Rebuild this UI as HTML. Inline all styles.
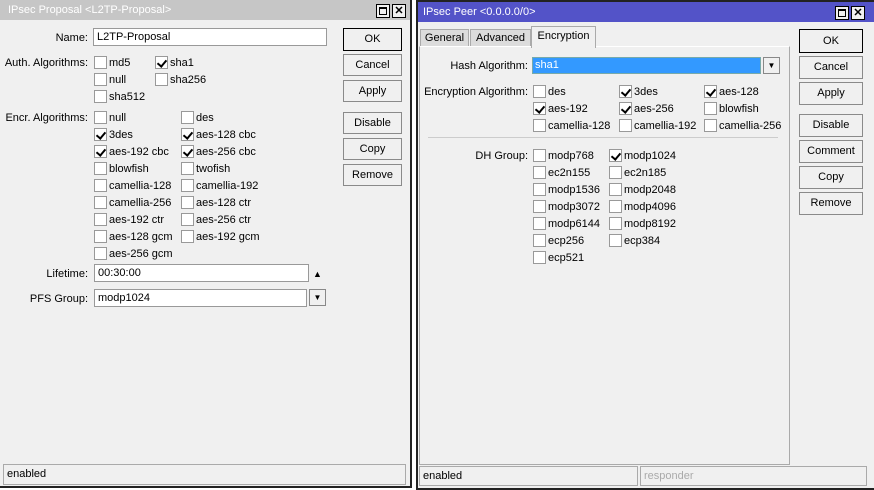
<!DOCTYPE html>
<html><head><meta charset="utf-8"><style>
*{margin:0;padding:0;box-sizing:border-box}
body{width:874px;height:488px;background:#fff;font-family:"Liberation Sans",sans-serif;font-size:11px;color:#000;position:relative;overflow:hidden}
.a{position:absolute;white-space:nowrap;line-height:13px;margin-top:1px}
.win{position:absolute;background:#f0f0f0;border:2px solid #222}
.title{position:absolute;left:0;right:0;top:0;height:20px;color:#fff;font-size:11px;line-height:20px;padding-left:4px}
.tb{position:absolute;top:3px;width:14px;height:14px;background:#f0f0f0;border:1px solid #000}
.cb{position:absolute;width:13px;height:13px;background:#fff;border:1px solid #999}
.cb.c::after{content:"";position:absolute;left:3px;top:1px;width:4px;height:7px;border:solid #000;border-width:0 2px 2px 0;transform:rotate(40deg)}
.btn{position:absolute;background:#f0f0f0;border:1px solid #8a8a8a;text-align:center;line-height:20px}
.in{position:absolute;background:#fff;border:1px solid #999;padding-left:3px;line-height:16px}
.lbl{position:absolute;text-align:right;white-space:nowrap;line-height:13px;margin-top:1px}
.dd{position:absolute;width:17px;height:17px;border:1px solid #888;background:#f0f0f0;font-size:8px;text-align:center;line-height:15px}
.st{position:absolute;border:1px solid #aaa;padding-left:3px;line-height:19px}
</style></head><body>

<div class="win" style="left:-2px;top:-2px;width:414px;height:490px">
<div class="title" style="background:#c6c6c6;padding-left:8px">IPsec Proposal &lt;L2TP-Proposal&gt;</div>
<div class="tb" style="left:376px;top:4px"><div style="position:absolute;left:2px;top:2px;width:8px;height:8px;border:1px solid #000;border-top-width:2px"></div></div>
<div class="tb" style="left:392px;top:4px;font-weight:bold;font-size:11px;line-height:12px;text-align:center">✕</div>
</div>
<div class="lbl" style="left:0;width:88px;top:31px">Name:</div>
<div class="in" style="left:93px;top:28px;width:234px;height:18px">L2TP-Proposal</div>
<div class="lbl" style="left:0;width:88px;top:56px">Auth. Algorithms:</div>
<div class="cb" style="left:94px;top:56px"></div><div class="a" style="left:109px;top:56px">md5</div>
<div class="cb c" style="left:155px;top:56px"></div><div class="a" style="left:170px;top:56px">sha1</div>
<div class="cb" style="left:94px;top:73px"></div><div class="a" style="left:109px;top:73px">null</div>
<div class="cb" style="left:155px;top:73px"></div><div class="a" style="left:170px;top:73px">sha256</div>
<div class="cb" style="left:94px;top:90px"></div><div class="a" style="left:109px;top:90px">sha512</div>

<div class="lbl" style="left:0;width:88px;top:111px">Encr. Algorithms:</div>
<div class="cb" style="left:94px;top:111px"></div><div class="a" style="left:109px;top:111px">null</div>
<div class="cb" style="left:181px;top:111px"></div><div class="a" style="left:196px;top:111px">des</div>
<div class="cb c" style="left:94px;top:128px"></div><div class="a" style="left:109px;top:128px">3des</div>
<div class="cb c" style="left:181px;top:128px"></div><div class="a" style="left:196px;top:128px">aes-128 cbc</div>
<div class="cb c" style="left:94px;top:145px"></div><div class="a" style="left:109px;top:145px">aes-192 cbc</div>
<div class="cb c" style="left:181px;top:145px"></div><div class="a" style="left:196px;top:145px">aes-256 cbc</div>
<div class="cb" style="left:94px;top:162px"></div><div class="a" style="left:109px;top:162px">blowfish</div>
<div class="cb" style="left:181px;top:162px"></div><div class="a" style="left:196px;top:162px">twofish</div>
<div class="cb" style="left:94px;top:179px"></div><div class="a" style="left:109px;top:179px">camellia-128</div>
<div class="cb" style="left:181px;top:179px"></div><div class="a" style="left:196px;top:179px">camellia-192</div>
<div class="cb" style="left:94px;top:196px"></div><div class="a" style="left:109px;top:196px">camellia-256</div>
<div class="cb" style="left:181px;top:196px"></div><div class="a" style="left:196px;top:196px">aes-128 ctr</div>
<div class="cb" style="left:94px;top:213px"></div><div class="a" style="left:109px;top:213px">aes-192 ctr</div>
<div class="cb" style="left:181px;top:213px"></div><div class="a" style="left:196px;top:213px">aes-256 ctr</div>
<div class="cb" style="left:94px;top:230px"></div><div class="a" style="left:109px;top:230px">aes-128 gcm</div>
<div class="cb" style="left:181px;top:230px"></div><div class="a" style="left:196px;top:230px">aes-192 gcm</div>
<div class="cb" style="left:94px;top:247px"></div><div class="a" style="left:109px;top:247px">aes-256 gcm</div>

<div class="lbl" style="left:0;width:88px;top:267px">Lifetime:</div>
<div class="in" style="left:94px;top:264px;width:215px;height:18px">00:30:00</div>
<div class="a" style="left:313px;top:267px;font-size:9px">▲</div>
<div class="lbl" style="left:0;width:88px;top:292px">PFS Group:</div>
<div class="in" style="left:94px;top:289px;width:213px;height:18px">modp1024</div>
<div class="dd" style="left:309px;top:289px">▼</div>

<div class="btn" style="left:343px;top:28px;width:59px;height:23px;border:1px solid #000;line-height:21px">OK</div>
<div class="btn" style="left:343px;top:54px;width:59px;height:22px">Cancel</div>
<div class="btn" style="left:343px;top:80px;width:59px;height:22px">Apply</div>
<div class="btn" style="left:343px;top:112px;width:59px;height:22px">Disable</div>
<div class="btn" style="left:343px;top:138px;width:59px;height:22px">Copy</div>
<div class="btn" style="left:343px;top:164px;width:59px;height:22px">Remove</div>

<div class="st" style="left:3px;top:464px;width:403px;height:21px">enabled</div>

<div class="win" style="left:416px;top:0;width:460px;height:490px">
<div class="title" style="background:#5353c8;padding-left:5px">IPsec Peer &lt;0.0.0.0/0&gt;</div>
<div class="tb" style="left:417px;top:4px"><div style="position:absolute;left:2px;top:2px;width:8px;height:8px;border:1px solid #000;border-top-width:2px"></div></div>
<div class="tb" style="left:433px;top:4px;font-weight:bold;font-size:11px;line-height:12px;text-align:center">✕</div>
</div>
<div class="a" style="left:420px;top:28px;width:49px;height:18px;background:#dcdcdc;border:1px solid #aaa;text-align:center;line-height:17px">General</div>
<div class="a" style="left:470px;top:28px;width:61px;height:18px;background:#dcdcdc;border:1px solid #aaa;text-align:center;line-height:17px">Advanced</div>
<div class="a" style="left:419px;top:45px;width:371px;height:419px;border:1px solid #aaa;border-top-color:#fff;background:#f0f0f0"></div>
<div class="a" style="left:531px;top:25px;width:65px;height:22px;background:#f0f0f0;border:1px solid #aaa;border-bottom:none;text-align:center;line-height:18px">Encryption</div>

<div class="lbl" style="left:420px;width:108px;top:59px">Hash Algorithm:</div>
<div class="in" style="left:532px;top:57px;width:229px;height:17px;background:#3399ff;border-color:#7aa;color:#fff;padding-left:2px;line-height:15px">sha1</div>
<div class="dd" style="left:763px;top:57px">▼</div>

<div class="lbl" style="left:420px;width:108px;top:85px">Encryption Algorithm:</div>
<div class="cb" style="left:533px;top:85px"></div><div class="a" style="left:548px;top:85px">des</div>
<div class="cb c" style="left:619px;top:85px"></div><div class="a" style="left:634px;top:85px">3des</div>
<div class="cb c" style="left:704px;top:85px"></div><div class="a" style="left:719px;top:85px">aes-128</div>
<div class="cb c" style="left:533px;top:102px"></div><div class="a" style="left:548px;top:102px">aes-192</div>
<div class="cb c" style="left:619px;top:102px"></div><div class="a" style="left:634px;top:102px">aes-256</div>
<div class="cb" style="left:704px;top:102px"></div><div class="a" style="left:719px;top:102px">blowfish</div>
<div class="cb" style="left:533px;top:119px"></div><div class="a" style="left:548px;top:119px">camellia-128</div>
<div class="cb" style="left:619px;top:119px"></div><div class="a" style="left:634px;top:119px">camellia-192</div>
<div class="cb" style="left:704px;top:119px"></div><div class="a" style="left:719px;top:119px">camellia-256</div>
<div class="a" style="left:428px;top:136px;width:350px;height:1px;background:#ccc"></div>

<div class="lbl" style="left:420px;width:108px;top:149px">DH Group:</div>
<div class="cb" style="left:533px;top:149px"></div><div class="a" style="left:548px;top:149px">modp768</div>
<div class="cb c" style="left:609px;top:149px"></div><div class="a" style="left:624px;top:149px">modp1024</div>
<div class="cb" style="left:533px;top:166px"></div><div class="a" style="left:548px;top:166px">ec2n155</div>
<div class="cb" style="left:609px;top:166px"></div><div class="a" style="left:624px;top:166px">ec2n185</div>
<div class="cb" style="left:533px;top:183px"></div><div class="a" style="left:548px;top:183px">modp1536</div>
<div class="cb" style="left:609px;top:183px"></div><div class="a" style="left:624px;top:183px">modp2048</div>
<div class="cb" style="left:533px;top:200px"></div><div class="a" style="left:548px;top:200px">modp3072</div>
<div class="cb" style="left:609px;top:200px"></div><div class="a" style="left:624px;top:200px">modp4096</div>
<div class="cb" style="left:533px;top:217px"></div><div class="a" style="left:548px;top:217px">modp6144</div>
<div class="cb" style="left:609px;top:217px"></div><div class="a" style="left:624px;top:217px">modp8192</div>
<div class="cb" style="left:533px;top:234px"></div><div class="a" style="left:548px;top:234px">ecp256</div>
<div class="cb" style="left:609px;top:234px"></div><div class="a" style="left:624px;top:234px">ecp384</div>
<div class="cb" style="left:533px;top:251px"></div><div class="a" style="left:548px;top:251px">ecp521</div>

<div class="btn" style="left:799px;top:29px;width:64px;height:24px;border:1px solid #000;line-height:22px">OK</div>
<div class="btn" style="left:799px;top:56px;width:64px;height:23px">Cancel</div>
<div class="btn" style="left:799px;top:82px;width:64px;height:23px">Apply</div>
<div class="btn" style="left:799px;top:114px;width:64px;height:23px">Disable</div>
<div class="btn" style="left:799px;top:140px;width:64px;height:23px">Comment</div>
<div class="btn" style="left:799px;top:166px;width:64px;height:23px">Copy</div>
<div class="btn" style="left:799px;top:192px;width:64px;height:23px">Remove</div>

<div class="st" style="left:419px;top:466px;width:219px;height:20px">enabled</div>
<div class="st" style="left:640px;top:466px;width:227px;height:20px;color:#aaa">responder</div>
</body></html>
